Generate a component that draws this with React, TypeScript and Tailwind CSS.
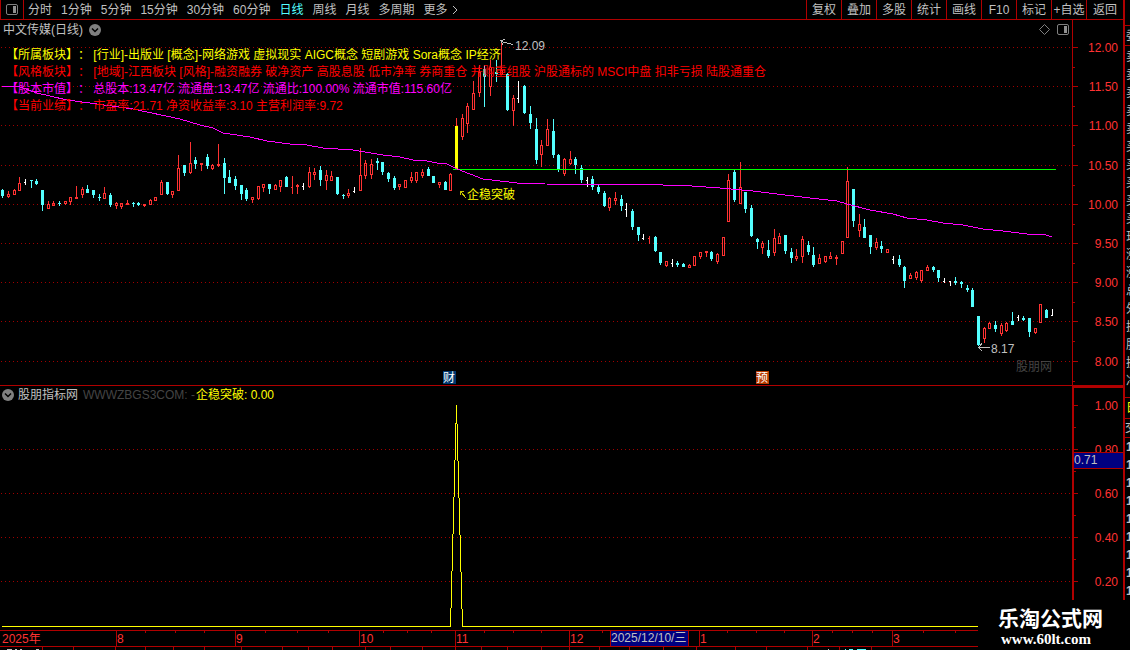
import { ReactNode } from 'react'

type Kind = 'u' | 'd' | 'w' | 'r' | 'y'
// x, high, body top, body bottom, low, kind (u = up, d = down, w / r = doji, y = signal)
type Candle = [number, number, number, number, number, Kind]

const candles: Candle[] = [
	[2, 189, 190, 196, 198, 'd'], [8, 191, 194, 197, 198, 'u'], [14, 189, 190, 195, 195, 'u'],
	[19, 177, 183, 191, 191, 'u'], [25, 179, 182, 183, 185, 'w'], [31, 180, 180, 181, 188, 'd'],
	[36, 179, 181, 184, 185, 'd'], [42, 190, 190, 205, 211, 'd'], [48, 201, 204, 209, 209, 'u'],
	[53, 201, 203, 206, 206, 'u'], [59, 201, 203, 204, 206, 'd'], [65, 201, 201, 204, 205, 'u'],
	[70, 197, 197, 202, 205, 'u'], [76, 186, 197, 199, 199, 'u'], [82, 187, 189, 195, 198, 'u'],
	[87, 185, 189, 193, 193, 'd'], [93, 190, 190, 195, 198, 'd'], [99, 194, 197, 198, 201, 'd'],
	[104, 187, 193, 199, 199, 'u'], [110, 193, 195, 205, 207, 'd'], [116, 202, 203, 206, 209, 'u'],
	[121, 203, 203, 207, 209, 'u'], [127, 200, 203, 205, 205, 'u'], [133, 202, 203, 204, 207, 'd'],
	[138, 202, 203, 205, 206, 'd'], [144, 204, 204, 206, 207, 'u'], [150, 199, 200, 205, 205, 'u'],
	[155, 197, 197, 201, 201, 'u'], [161, 180, 182, 195, 195, 'u'], [167, 182, 182, 194, 195, 'd'],
	[172, 191, 191, 195, 198, 'u'], [178, 155, 168, 191, 191, 'u'], [184, 165, 165, 173, 176, 'd'],
	[190, 142, 163, 173, 174, 'u'], [195, 157, 160, 164, 169, 'd'], [201, 163, 163, 165, 171, 'u'],
	[207, 154, 157, 166, 169, 'd'], [212, 164, 165, 169, 170, 'u'], [218, 144, 164, 166, 167, 'u'],
	[224, 158, 163, 178, 194, 'd'], [229, 170, 177, 183, 183, 'd'], [235, 176, 179, 186, 190, 'd'],
	[241, 185, 185, 194, 200, 'd'], [246, 188, 190, 199, 201, 'd'], [252, 197, 197, 200, 203, 'u'],
	[258, 186, 186, 199, 200, 'u'], [263, 184, 184, 188, 192, 'u'], [269, 184, 184, 189, 194, 'd'],
	[275, 184, 185, 190, 190, 'u'], [280, 180, 180, 187, 192, 'u'], [286, 176, 177, 187, 187, 'd'],
	[292, 176, 187, 188, 194, 'r'], [297, 184, 185, 187, 194, 'u'], [303, 183, 186, 187, 190, 'w'],
	[309, 167, 172, 187, 188, 'u'], [314, 168, 172, 175, 180, 'u'], [320, 166, 170, 180, 186, 'd'],
	[326, 170, 175, 181, 190, 'u'], [331, 171, 176, 181, 181, 'u'], [337, 177, 177, 194, 195, 'd'],
	[343, 194, 195, 196, 199, 'd'], [348, 189, 193, 196, 198, 'u'], [354, 187, 191, 192, 193, 'w'],
	[360, 148, 175, 191, 191, 'u'], [365, 160, 163, 176, 179, 'u'], [371, 159, 164, 175, 179, 'u'],
	[377, 158, 161, 163, 170, 'd'], [382, 162, 162, 172, 175, 'd'], [388, 172, 173, 179, 182, 'd'],
	[394, 176, 178, 188, 190, 'd'], [399, 184, 184, 187, 190, 'u'], [405, 180, 180, 188, 188, 'u'],
	[411, 172, 177, 181, 183, 'u'], [416, 172, 172, 181, 183, 'u'], [422, 169, 172, 176, 178, 'u'],
	[428, 167, 169, 176, 176, 'd'], [433, 176, 176, 183, 183, 'd'], [439, 182, 182, 185, 188, 'u'],
	[445, 181, 182, 190, 190, 'd'], [450, 173, 174, 191, 191, 'u'], [456, 118, 126, 169, 169, 'y'],
	[462, 114, 118, 137, 140, 'u'], [467, 103, 106, 124, 133, 'u'], [473, 81, 93, 110, 110, 'u'],
	[479, 65, 72, 93, 97, 'u'], [484, 65, 69, 77, 107, 'd'], [490, 60, 67, 87, 96, 'u'],
	[496, 60, 72, 74, 82, 'd'], [501, 41, 70, 75, 75, 'u'], [507, 73, 74, 110, 111, 'd'],
	[513, 95, 98, 111, 126, 'u'], [518, 81, 98, 99, 103, 'w'], [524, 85, 86, 113, 114, 'd'],
	[530, 106, 114, 123, 129, 'd'], [536, 118, 129, 160, 164, 'd'], [541, 140, 145, 155, 167, 'u'],
	[547, 119, 129, 146, 146, 'u'], [553, 119, 131, 155, 158, 'd'], [558, 154, 155, 169, 172, 'd'],
	[564, 158, 159, 174, 176, 'u'], [570, 151, 159, 164, 165, 'u'], [575, 157, 159, 165, 174, 'd'],
	[581, 165, 168, 180, 183, 'd'], [587, 177, 180, 181, 187, 'w'], [592, 176, 179, 187, 190, 'd'],
	[598, 185, 187, 192, 194, 'd'], [604, 191, 193, 206, 207, 'd'], [609, 197, 198, 208, 211, 'u'],
	[615, 192, 198, 201, 205, 'u'], [621, 195, 199, 206, 211, 'd'], [626, 203, 209, 210, 217, 'w'],
	[632, 209, 211, 227, 230, 'd'], [638, 227, 227, 235, 241, 'd'], [643, 234, 238, 239, 240, 'w'],
	[649, 236, 238, 239, 244, 'r'], [655, 236, 237, 251, 252, 'd'], [660, 252, 252, 263, 265, 'd'],
	[666, 261, 261, 266, 267, 'u'], [672, 259, 263, 264, 267, 'w'], [677, 261, 263, 265, 267, 'd'],
	[683, 263, 264, 267, 267, 'd'], [689, 264, 265, 268, 268, 'u'], [694, 256, 256, 266, 266, 'u'],
	[700, 252, 252, 257, 259, 'u'], [706, 251, 251, 253, 257, 'u'], [711, 251, 252, 259, 261, 'd'],
	[717, 253, 254, 262, 264, 'u'], [723, 237, 237, 256, 256, 'u'], [728, 174, 180, 222, 222, 'u'],
	[734, 170, 172, 200, 202, 'd'], [740, 162, 187, 204, 204, 'u'], [745, 192, 192, 209, 213, 'd'],
	[751, 205, 208, 236, 237, 'd'], [757, 238, 239, 242, 249, 'd'], [762, 241, 243, 248, 254, 'u'],
	[768, 240, 250, 256, 258, 'd'], [774, 229, 238, 253, 256, 'u'], [779, 233, 236, 244, 244, 'u'],
	[785, 235, 235, 251, 254, 'd'], [791, 248, 252, 258, 263, 'd'], [796, 249, 256, 259, 261, 'u'],
	[802, 236, 239, 257, 263, 'u'], [808, 241, 245, 252, 255, 'd'], [813, 247, 255, 265, 267, 'd'],
	[819, 254, 258, 264, 264, 'u'], [825, 256, 256, 262, 263, 'u'], [830, 252, 256, 259, 259, 'u'],
	[836, 255, 257, 259, 265, 'u'], [842, 241, 241, 254, 254, 'u'], [847, 167, 181, 238, 238, 'u'],
	[853, 189, 189, 221, 227, 'd'], [859, 214, 224, 231, 237, 'u'], [864, 219, 227, 238, 238, 'd'],
	[870, 235, 235, 247, 254, 'd'], [876, 238, 242, 248, 250, 'u'], [881, 241, 246, 249, 253, 'd'],
	[887, 249, 249, 253, 253, 'u'], [893, 256, 259, 260, 264, 'w'], [899, 255, 259, 265, 267, 'd'],
	[904, 266, 267, 281, 288, 'd'], [910, 273, 275, 279, 279, 'u'], [916, 271, 272, 278, 280, 'u'],
	[921, 270, 270, 281, 283, 'u'], [927, 265, 267, 271, 271, 'u'], [933, 266, 267, 270, 272, 'd'],
	[938, 270, 270, 278, 282, 'd'], [944, 278, 281, 282, 283, 'w'], [950, 281, 281, 282, 286, 'w'],
	[955, 277, 281, 283, 285, 'd'], [961, 281, 282, 284, 288, 'd'], [967, 285, 288, 290, 292, 'd'],
	[972, 288, 290, 307, 307, 'd'], [978, 316, 316, 345, 346, 'd'], [984, 327, 328, 339, 343, 'u'],
	[989, 322, 323, 329, 329, 'u'], [995, 321, 325, 329, 332, 'd'], [1001, 323, 325, 334, 336, 'u'],
	[1006, 322, 323, 331, 332, 'u'], [1012, 312, 321, 325, 325, 'd'], [1018, 315, 317, 318, 321, 'w'],
	[1023, 316, 318, 320, 321, 'd'], [1029, 318, 318, 332, 337, 'd'], [1035, 328, 328, 333, 334, 'u'],
	[1040, 304, 304, 323, 323, 'u'], [1046, 309, 310, 318, 318, 'd'], [1052, 309, 315, 316, 316, 'w'],
]

const average =
	'2,86 20,87 37,93 67,100 90,103 133,109 180,119 200,125 213,128 223,133 250,137 267,141 290,144 307,145 323,148 353,150 383,155 400,157 413,160 427,161 437,163 447,164 457,169 483,179 517,183 545,184 663,185 692,186 720,188 753,191 777,194 810,198 837,201 847,204 870,210 893,214 907,218 927,220 943,223 963,225 983,229 1003,231 1027,234 1043,234 1052,237'

const priceTicks = [
	[47, '12.00'], [86, '11.50'], [125, '11.00'], [165, '10.50'], [204, '10.00'],
	[243, '9.50'], [282, '9.00'], [321, '8.50'], [361, '8.00'],
] as const

const signalTicks = [
	[405, '1.00'], [449, '0.80'], [493, '0.60'], [537, '0.40'], [581, '0.20'],
] as const

const months = [
	[116, '8'], [235, '9'], [359, '10'], [455, '11'], [569, '12'], [699, '1'], [812, '2'], [892, '3'],
] as const
const weekTicks = [145, 175, 204, 265, 297, 328, 383, 407, 431, 484, 513, 541, 602, 727, 756, 784, 832, 852, 872, 923, 955]
const lowerTicks = [42, 73, 115, 145, 173, 204, 241, 282, 308, 332, 365, 390, 422, 455, 481, 507, 541, 569, 599, 629, 663, 696, 735, 766, 807, 839, 871]

const periods = ['分时', '1分钟', '5分钟', '15分钟', '30分钟', '60分钟', '日线', '周线', '月线', '多周期']
const tools = ['复权', '叠加', '多股', '统计', '画线', 'F10', '标记', '+自选', '返回']

const infoLines = [
	{
		label: '【所属板块】：',
		text: '[行业]-出版业 [概念]-网络游戏 虚拟现实 AIGC概念 短剧游戏 Sora概念 IP经济',
		color: 'text-[#ffff00]',
	},
	{
		label: '【风格板块】：',
		text: '[地域]-江西板块 [风格]-融资融券 破净资产 高股息股 低市净率 券商重仓 并购重组股 沪股通标的 MSCI中盘 扣非亏损 陆股通重仓',
		color: 'text-[#ff0000]',
	},
	{
		label: '【股本市值】：',
		text: '总股本:13.47亿 流通盘:13.47亿 流通比:100.00% 流通市值:115.60亿',
		color: 'text-[#ff00ff]',
	},
	{
		label: '【当前业绩】：',
		text: '市盈率:21.71 净资收益率:3.10 主营利润率:9.72',
		color: 'text-[#ff0000]',
	},
]

const quoteRows = ['卖', '卖', '卖', '卖', '卖', '买', '买', '买', '买', '买', '现', '涨', '涨', '总', '外', '换', '股', '换', '净']
const quoteDigits = ['1', '1', '1', '1', '1', '1', '1', '1', '1']

function CandleShape({ candle }: { candle: Candle }) {
	const [x, high, top, bottom, low, kind] = candle
	if (kind === 'w' || kind === 'r') {
		const fill = kind === 'w' ? '#ffffff' : '#ff3232'
		return (
			<g fill={fill}>
				<rect x={x} y={high} width={1} height={low - high} />
				<rect x={x - 1} y={top} width={1} height={1} />
			</g>
		)
	}
	if (kind === 'u') {
		return (
			<g fill="#ff3232">
				<rect x={x} y={high} width={1} height={top - high} />
				<rect x={x} y={bottom} width={1} height={low - bottom} />
				<rect x={x - 1} y={top} width={1} height={bottom - top} />
				<rect x={x + 1} y={top} width={1} height={bottom - top} />
				<rect x={x - 1} y={top} width={3} height={1} />
				<rect x={x - 1} y={bottom - 1} width={3} height={1} />
			</g>
		)
	}
	return (
		<g fill={kind === 'y' ? '#ffff00' : '#54ffff'}>
			<rect x={x} y={high} width={1} height={low - high} fill={kind === 'y' ? '#ff3232' : undefined} />
			<rect x={x - 1} y={top} width={3} height={bottom - top} />
		</g>
	)
}

function GridLine({ y }: { y: number }) {
	return <line x1="1" x2="100%" y1={y + 0.5} y2={y + 0.5} stroke="#a00000" strokeDasharray="1 3" />
}

function PanelIcon() {
	return (
		<svg width="12" height="11" viewBox="0 0 12 11" fill="none">
			<rect x="0.5" y="0.5" width="11" height="10" rx="1.5" stroke="#808080" />
			<rect x="7" y="2" width="3" height="7" fill="#909090" />
		</svg>
	)
}

function CircleButton({ label }: { label: string }) {
	return (
		<button aria-label={label} className="shrink-0">
			<svg width="12" height="12" viewBox="0 0 12 12" fill="none">
				<circle cx="6" cy="6" r="6" fill="#808080" />
				<path d="M3 4.5 6 7.5 9 4.5" stroke="#000000" strokeWidth="1.5" />
			</svg>
		</button>
	)
}

function Toolbar() {
	return (
		<header className="flex h-5 items-stretch justify-between border-b border-[#b00000]">
			<div className="flex items-center">
				<button
					aria-label="侧栏"
					className="mr-1 flex h-full w-6 items-center justify-center border-x border-[#b00000] pb-px"
				>
					<PanelIcon />
				</button>
				<nav className="flex items-center gap-[9px]">
					{periods.map((period) => (
						<button
							key={period}
							className={period === '日线' ? 'text-[#54ffff]' : 'text-[#c0c0c0]'}
						>
							{period}
						</button>
					))}
					<button className="flex items-center gap-1">
						更多
						<svg width="6" height="10" viewBox="0 0 6 10" fill="none" stroke="#c0c0c0">
							<path d="M1 1 5 5 1 9" />
						</svg>
					</button>
				</nav>
			</div>
			<div className="flex">
				{tools.map((tool) => (
					<button
						key={tool}
						className="w-[35px] whitespace-nowrap border-l border-[#b00000] text-center last:w-[37px]"
					>
						{tool}
					</button>
				))}
			</div>
		</header>
	)
}

function ChartSvg({ top, children }: { top: number; children: ReactNode }) {
	return (
		<svg className="absolute inset-0 h-full w-full" shapeRendering="crispEdges" fontSize="12">
			<g transform={`translate(0 ${-top})`}>{children}</g>
		</svg>
	)
}

function PricePanel() {
	return (
		<section className="flex h-[366px] border-b border-[#b00000]">
			<div className="relative min-w-0 flex-1 overflow-hidden">
				<ChartSvg top={20}>
					{priceTicks.map(([y]) => (
						<GridLine key={y} y={y} />
					))}
					<text x="1016" y="371" fill="#444444">股朋网</text>
					{candles.map((candle) => (
						<CandleShape key={candle[0]} candle={candle} />
					))}
					<rect x="453" y="169" width="603" height="1" fill="#00ff00" />
					<polyline points={average} fill="none" stroke="#ff00ff" />
					<g stroke="#c0c0c0" fill="none">
						<path d="M513 44.5 501 41.5M505 39.5 501 40.5 503 45" />
						<path d="M990 347.5H978M982 343.5 978.5 347.5 982 351" />
					</g>
					<g fill="#c0c0c0">
						<text x="515" y="50">12.09</text>
						<text x="991" y="353">8.17</text>
					</g>
					<path d="M466 198 461 192M460.5 195V191.5H464" stroke="#c8c800" fill="none" />
					<text x="467" y="199" fill="#ffff00">企稳突破</text>
					<rect x="443" y="371" width="13" height="13" fill="#003870" />
					<text x="443" y="382" fill="#ffffff">财</text>
					<rect x="756" y="371" width="13" height="13" fill="#b83c00" />
					<text x="756" y="382" fill="#ffffff">预</text>
				</ChartSvg>
				<div className="relative">
					<div className="flex h-[19px] items-center justify-between pl-[3px] pr-[3px]">
						<div className="flex items-center gap-[6px]">
							<h1>中文传媒(日线)</h1>
							<CircleButton label="展开" />
						</div>
						<div className="flex items-center gap-[7px]">
							<svg width="11" height="11" viewBox="0 0 11 11" fill="none" stroke="#808080">
								<path d="M5.5 0.5 10.5 5.5 5.5 10.5 0.5 5.5Z" />
							</svg>
							<PanelIcon />
						</div>
					</div>
					<div className="mt-2 pl-[6px] [text-spacing-trim:space-all]">
						{infoLines.map((line) => (
							<p key={line.label} className={`whitespace-nowrap leading-[17px] ${line.color}`}>
								{line.label} {line.text}
							</p>
						))}
					</div>
				</div>
			</div>
			<div className="relative w-[51px] shrink-0 border-l border-[#b00000]">
				<ChartSvg top={20}>
					{priceTicks.map(([y, label]) => (
						<g key={label}>
							<rect x="0" y={y} width="5" height="1" fill="#b00000" />
							<rect x="0" y={y + 20} width="2" height="1" fill="#b00000" />
							<text x="45" y={y + 5} textAnchor="end" fill="#ff3232">{label}</text>
						</g>
					))}
				</ChartSvg>
			</div>
		</section>
	)
}

function SignalPanel() {
	return (
		<section className="flex h-[244px]">
			<div className="relative min-w-0 flex-1 overflow-hidden">
				<ChartSvg top={386}>
					{signalTicks.slice(1).map(([y]) => (
						<GridLine key={y} y={y} />
					))}
					<polyline
						points="2,626.5 450.5,626.5 456.5,405 462.5,626.5 1056,626.5"
						fill="none"
						stroke="#ffff00"
					/>
				</ChartSvg>
				<div className="relative flex h-[17px] items-center whitespace-nowrap pl-[2px]">
					<CircleButton label="指标" />
					<h2 className="ml-1">股朋指标网</h2>
					<span className="ml-[5px] text-[#444444]">WWWZBGS3COM: -</span>
					<span className="ml-px text-[#ffff00]">企稳突破: 0.00</span>
				</div>
			</div>
			<div className="relative w-[51px] shrink-0 border-2 border-r-0 border-[#b00000]">
				<ChartSvg top={388}>
					{signalTicks.map(([y, label]) => (
						<g key={label}>
							<rect x="0" y={y} width="4" height="1" fill="#b00000" />
							<rect x="0" y={y + 22} width="2" height="1" fill="#b00000" />
							<text x="44" y={y + 5} textAnchor="end" fill="#ff3232">{label}</text>
						</g>
					))}
					<rect x="0" y="452" width="52" height="17" fill="#b00000" />
					<rect x="0" y="453" width="52" height="15" fill="#000080" />
					<text x="0" y="464" fill="#c0c0c0">0.71</text>
				</ChartSvg>
			</div>
		</section>
	)
}

function DateAxis() {
	return (
		<footer className="relative h-5 border-t border-[#b00000]">
			<ChartSvg top={631}>
				<rect x="0" y="646" width="100%" height="1" fill="#b00000" />
				{weekTicks.map((x) => (
					<rect key={x} x={x} y="631" width="1" height="2" fill="#b00000" />
				))}
				{lowerTicks.map((x) => (
					<rect key={x} x={x} y="647" width="1" height="3" fill="#b00000" />
				))}
				<text x="2" y="643" fill="#ff3232">2025年</text>
				{months.map(([x, label]) => (
					<g key={label}>
						<rect x={x} y="631" width="1" height="15" fill="#b00000" />
						<text x={x + 1} y="643" fill="#ff3232">{label}</text>
					</g>
				))}
				<rect x="610" y="631" width="79" height="15" fill="#b00000" />
				<rect x="611" y="631" width="77" height="15" fill="#000080" />
				<text x="611" y="642" fill="#c0c0c0">2025/12/10/三</text>
				<path d="M7 649.5H12M15 649.5H17M20 649.5H22M36 649.5H39M828 649.5H829" stroke="#c0c0c0" />
				<path d="M845 649.5H846M849 649.5H853M857 649.5H866" stroke="#54ffff" />
			</ChartSvg>
		</footer>
	)
}

function QuoteStrip() {
	return (
		<aside className="flex w-[7px] shrink-0 flex-col overflow-hidden border-l-2 border-[#b00000]">
			<div className="h-[26px] border-b border-[#b00000]" />
			<div className="h-5 border-b border-[#b00000] pl-px leading-5">委</div>
			<ul className="h-[352px] overflow-hidden border-b border-[#b00000] pl-px pt-[2px]">
				{quoteRows.map((row, i) => (
					<li key={i} className="h-[18px] leading-[18px]">{row}</li>
				))}
			</ul>
			<div className="h-[21px] border-b border-[#b00000] pl-px leading-5 text-[#ffff00]">日</div>
			<div className="h-[19px] border-b border-[#b00000] leading-[18px]">交</div>
			<ul className="pl-px">
				{quoteDigits.map((digit, i) => (
					<li key={i} className="h-[18px] font-bold leading-[18px]">{digit}</li>
				))}
			</ul>
		</aside>
	)
}

export default function App() {
	return (
		<div className="relative flex min-h-screen overflow-hidden bg-black font-['Liberation_Sans','Noto_Sans_CJK_SC',sans-serif] text-[12px] leading-4 text-[#c0c0c0]">
			<main className="min-w-0 flex-1">
				<Toolbar />
				<PricePanel />
				<SignalPanel />
				<DateAxis />
			</main>
			<QuoteStrip />
			<div className="absolute bottom-0 right-0 h-[50px] w-[152px] bg-black pl-5 pt-[6px] text-white">
				<p className="text-[21px] font-bold leading-[26px]">乐淘公式网</p>
				<p className="pl-[3px] font-['Liberation_Serif',serif] text-[15px] font-bold leading-[14px]">
					www.60lt.com
				</p>
			</div>
		</div>
	)
}
